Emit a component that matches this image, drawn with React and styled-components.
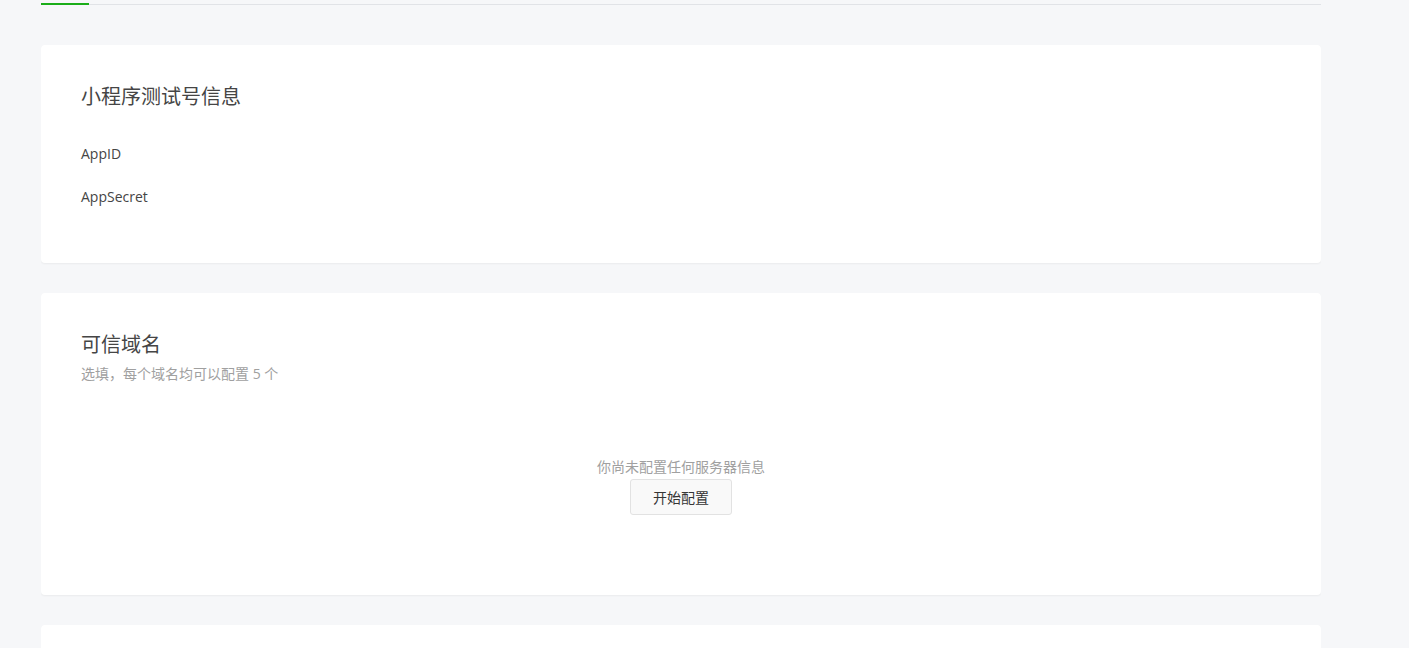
import React from 'react';
import styled, { createGlobalStyle } from 'styled-components';

const GlobalStyle = createGlobalStyle`
	html, body {
		margin: 0;
		padding: 0;
		background: #f6f7f9;
		font-family: "Open Sans", "Noto Sans CJK SC", sans-serif;
		color: #353535;
	}
`;

const Page = styled.div`
	width: 1280px;
	margin-left: 41px;
	height: 648px;
	overflow: hidden;
`;

const TabBar = styled.div`
	height: 5px;
	border-bottom: 1px solid #e1e3e7;
	display: flex;
	align-items: flex-end;
	box-sizing: border-box;
`;

const TabIndicator = styled.div`
	width: 48px;
	height: 2px;
	margin-bottom: -1px;
	background: #1aad19;
`;

const Cards = styled.div`
	display: flex;
	flex-direction: column;
	gap: 30px;
	margin-top: 40px;
`;

const Card = styled.section`
	background: #fff;
	border-radius: 4px;
	box-shadow: 0 1px 2px rgba(0, 0, 0, 0.05);
	padding: 41px 40px ${(p) => p.$bottom || 45}px;
	min-height: ${(p) => p.$minHeight || 0}px;
`;

const Title = styled.h2`
	margin: 0;
	font-size: 20px;
	font-weight: normal;
	line-height: 22px;
	color: #454545;
`;

const Desc = styled.p`
	margin: 8px 0 0;
	font-size: 14px;
	line-height: 20px;
	color: #a0a0a0;
`;

const InfoList = styled.ul`
	list-style: none;
	margin: 24px 0 0;
	padding: 0;
`;

const InfoRow = styled.li`
	height: 43px;
	line-height: 43px;
	font-size: 14px;
	color: #454545;
`;

const Empty = styled.div`
	display: flex;
	flex-direction: column;
	align-items: center;
	padding-top: 73px;
`;

const EmptyText = styled.div`
	font-size: 14px;
	line-height: 20px;
	color: #a0a0a0;
`;

const Button = styled.button`
	margin-top: 2px;
	width: 102px;
	height: 36px;
	border: 1px solid #e2e2e2;
	border-radius: 3px;
	background: #f9f9f9;
	font-family: inherit;
	font-size: 14px;
	color: #353535;
	cursor: pointer;
`;

export default function App() {
	return (
		<>
			<GlobalStyle />
			<Page>
				<TabBar>
					<TabIndicator />
				</TabBar>
				<Cards>
					<Card>
						<Title>小程序测试号信息</Title>
						<InfoList>
							<InfoRow>AppID</InfoRow>
							<InfoRow>AppSecret</InfoRow>
						</InfoList>
					</Card>
					<Card $bottom={80}>
						<Title>可信域名</Title>
						<Desc>选填，每个域名均可以配置 5 个</Desc>
						<Empty>
							<EmptyText>你尚未配置任何服务器信息</EmptyText>
							<Button>开始配置</Button>
						</Empty>
					</Card>
					<Card $minHeight={200} />
				</Cards>
			</Page>
		</>
	);
}
